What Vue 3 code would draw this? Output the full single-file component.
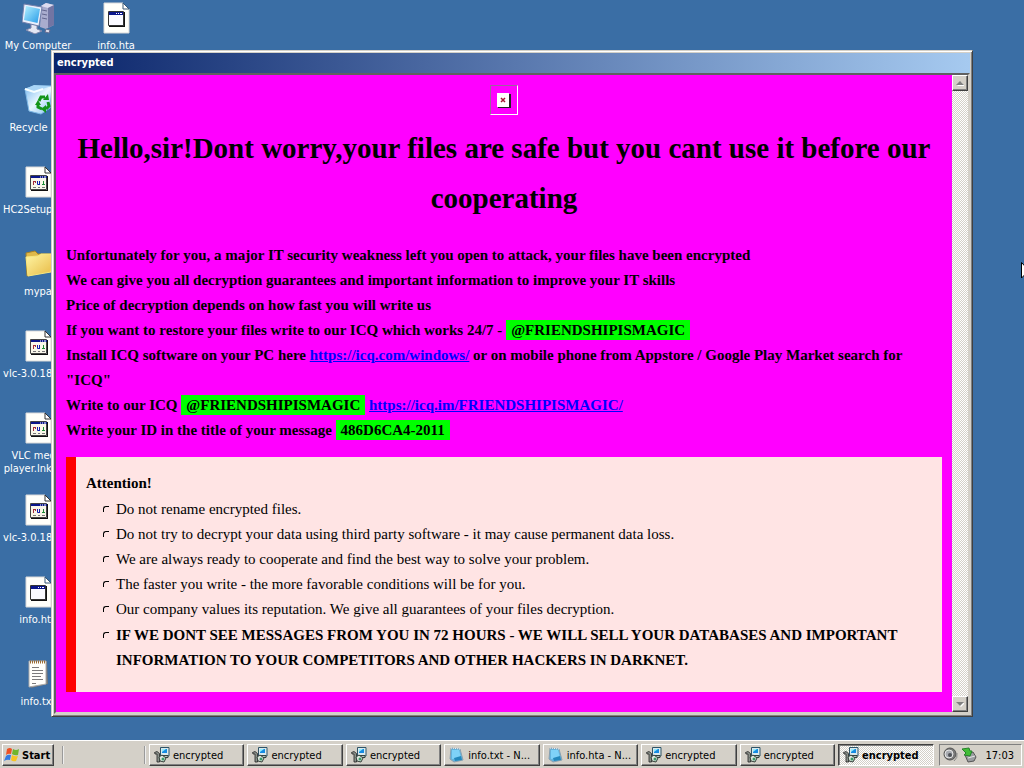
<script setup>
const firstColumn = [
  { icon: 'computer', label: 'My Computer' },
  { icon: 'recycle', label: 'Recycle Bin' },
  { icon: 'program', label: 'HC2Setup.exe' },
  { icon: 'folder', label: 'mypa' },
  { icon: 'program', label: 'vlc-3.0.18-win' },
  { icon: 'program', label: 'VLC media player.lnk.exe' },
  { icon: 'program', label: 'vlc-3.0.18-win' },
  { icon: 'hta', label: 'info.hta' },
  { icon: 'text', label: 'info.txt' }
]
const secondColumn = [{ icon: 'hta', label: 'info.hta' }]

const tasks = [
  { icon: 'installer', label: 'encrypted' },
  { icon: 'installer', label: 'encrypted' },
  { icon: 'installer', label: 'encrypted' },
  { icon: 'notepad', label: 'info.txt - N...' },
  { icon: 'notepad', label: 'info.hta - N...' },
  { icon: 'installer', label: 'encrypted' },
  { icon: 'installer', label: 'encrypted' },
  { icon: 'installer', label: 'encrypted', active: true }
]

const rules = [
  'Do not rename encrypted files.',
  'Do not try to decrypt your data using third party software - it may cause permanent data loss.',
  'We are always ready to cooperate and find the best way to solve your problem.',
  'The faster you write - the more favorable conditions will be for you.',
  'Our company values its reputation. We give all guarantees of your files decryption.'
]
</script>

<template>
  <div class="screen">
    <svg class="defs" aria-hidden="true">
      <defs>
        <linearGradient id="g-screen" x1="0" y1="0" x2="1" y2="1">
          <stop offset="0" stop-color="#b5f1ff" /><stop offset="1" stop-color="#269be8" />
        </linearGradient>
        <linearGradient id="g-bin" x1="0" y1="0" x2="1" y2="1">
          <stop offset="0" stop-color="#7db9ee" /><stop offset=".5" stop-color="#e8f7ff" /><stop offset="1" stop-color="#83bff0" />
        </linearGradient>
        <linearGradient id="g-folder" x1="0" y1="0" x2="1" y2="1">
          <stop offset="0" stop-color="#fff6a6" /><stop offset="1" stop-color="#e7b943" />
        </linearGradient>
      </defs>
      <symbol id="computer" viewBox="0 0 32 32">
        <path d="M19 4 24 1 32 3V23L24 27 18 25Z" fill="#a9acce" />
        <path d="M19 4 24 1 32 3 26 6Z" fill="#dcdcf0" />
        <path d="M26 6 32 3V23L26 26Z" fill="#7275a3" />
        <path d="M20 8 25 9M20 12 25 13M20 16 25 17" stroke="#62668e" />
        <path d="M9 22 15 23 15 27 20 29 13 32 4 28 9 26Z" fill="#e4e7f3" stroke="#7e86ab" />
        <path d="M2 2 20 5 17 24 0 20Z" fill="#e9effc" stroke="#727ea9" />
        <path d="M4 4 18 7 15.500 21 2 18Z" fill="url(#g-screen)" />
        <path d="M24 27 28 28 27 31 23 30Z" fill="#d9dbe9" stroke="#686d91" />
      </symbol>
      <symbol id="recycle" viewBox="0 0 32 32">
        <path d="M3 5 12 2 30 2 28 24 19 30 7 27Z" fill="url(#g-bin)" stroke="#7eb8e6" />
        <path d="M3 5 12 8 20 5 30 2 12 1Z" fill="#a8d5f7" />
        <path d="M3 5 12 8 21 5" fill="none" stroke="#f5fdff" stroke-width="2" />
        <path d="M17 17 19 13 23 13M26 18 27 22 24 25M20 25 16 23 16 20" fill="none" stroke="#139519" stroke-width="3" />
        <path d="M21 16H27L26 10ZM24 21 19 25 24 29ZM13 21 19 21 16 16Z" fill="#139519" />
      </symbol>
      <symbol id="hta" viewBox="0 0 32 32">
        <path d="M4 1H23L29 7V31H4Z" fill="#fffffa" stroke="#d9d9d9" />
        <path d="M23 1V7H29Z" fill="#fff" stroke="#365775" />
        <path d="M9 10H25V25H9Z" fill="#111" />
        <path d="M8.500 9.500H23.500V23.500H8.500Z" fill="#fafaff" stroke="#333" />
        <path d="M9 10H23V13H9Z" fill="#0a168b" />
        <path d="M16 11.500H17M18 11.500H19M20 11.500H22" stroke="#fff" />
      </symbol>
      <symbol id="program" viewBox="0 0 32 32">
        <path d="M4 1H23L29 7V31H4Z" fill="#fffffa" stroke="#d9d9d9" />
        <path d="M23 1V7H29Z" fill="#fff" stroke="#333" />
        <path d="M9 10H26V25H9Z" fill="#111" />
        <path d="M8 9H25V24H8Z" fill="#faf7e9" />
        <path d="M8.500 9.500H24.500V23.500H8.500Z" fill="none" stroke="#444" />
        <path d="M9 10H25V12H9Z" fill="#0a168b" />
        <path d="M18 11H19M20 11H21M22 11H24" stroke="#fff" />
        <path d="M11.500 15V19M11 15.500H14M13.500 15V17" fill="none" stroke="#a22c39" />
        <path d="M15.500 15V18.500H18M17.500 15V18" fill="none" stroke="#141eaf" />
        <path d="M20 18.500H23M21.500 15V19" stroke="#1c8e36" />
        <path d="M11 21.500H14M16 21.500H18M20 21.500H23" stroke="#777" />
      </symbol>
      <symbol id="folder" viewBox="0 0 32 32">
        <path d="M4 5 13 3 16 6 29 6V22L5 28Z" fill="#dfb84a" stroke="#a68227" />
        <path d="M4 9 16 8 19 6 31 6 29 24 6 28Z" fill="url(#g-folder)" stroke="#f8e77d" />
      </symbol>
      <symbol id="text" viewBox="0 0 32 32">
        <path d="M9 4 25 3 26 26 9 30Z" fill="#777" />
        <path d="M7 3H24V26L7 29Z" fill="#fffffb" stroke="#aaa" />
        <path d="M8 4H24" stroke="#9b6d35" stroke-width="3" stroke-dasharray="1 1" />
        <path d="M10 9.500H17M10 12.500H21M10 15.500H21M10 18.500H19M10 21.500H21M10 25.500H14" stroke="#7c7c7c" />
      </symbol>
      <symbol id="installer" viewBox="0 0 16 16">
        <path d="M6.500 .5H15V9H6.500Z" fill="#d9e9ee" stroke="#305467" />
        <path d="M8 2H13V6H8Z" fill="#158be2" />
        <path d="M8 2H12L8 5Z" fill="#91ecff" />
        <path d="M8 8.500H14V10.500H8Z" fill="#aebfbb" stroke="#35433e" />
        <path d="M.5 5.500 3 4.500 5.500 6.500V15H3V7H1Z" fill="#8b918b" stroke="#222" stroke-width=".8" />
        <path d="M5 10 8 8 12 11 10 15 6 14Z" fill="#dce5dd" stroke="#344039" />
        <circle cx="9" cy="12" r="1.500" fill="#3b986a" />
      </symbol>
      <symbol id="notepad" viewBox="0 0 16 16">
        <path d="M2 1 11 2 14 13 5 15 1 12Z" fill="#62b4df" stroke="#8aa0b0" />
        <path d="M3 3 10 3 12 11 3 12Z" fill="#7fd2f8" />
        <path d="M5 11 12 9 13 13 6 14Z" fill="#2589bd" />
        <path d="M2 1 11 2" stroke="#eef6fa" stroke-dasharray="1 1" />
      </symbol>
      <symbol id="flag" viewBox="0 0 16 16">
        <path d="M3 2Q6 0 8 2L7 7Q4 6 2 8Z" fill="#ee5124" />
        <path d="M9 2Q12 4 15 2L14 8Q11 9 8 7Z" fill="#70b52c" />
        <path d="M2 9Q4 7 7 8L6 13Q3 12 0 14Z" fill="#337be2" />
        <path d="M8 8Q11 10 14 9L12 14Q9 15 7 13Z" fill="#f8c421" />
      </symbol>
      <symbol id="volume" viewBox="0 0 16 16">
        <circle cx="8" cy="7" r="6" fill="#777" stroke="#555" />
        <circle cx="7" cy="7" r="4" fill="#a9acb2" stroke="#e6e6e6" />
        <circle cx="8" cy="8" r="2" fill="#4e5258" />
        <path d="M15 6Q16 11 12 14" fill="none" stroke="#888" />
      </symbol>
      <symbol id="eject" viewBox="0 0 16 16">
        <path d="M4 8 12 5 15 10 13 14 7 15Z" fill="#9b9ea2" stroke="#555" />
        <path d="M7 11 14 9" stroke="#e6e6e6" />
        <path d="M1 2 8 1 9 4 11 4 9 9 3 8 5 6Z" fill="#42bd38" stroke="#25832b" />
      </symbol>
    </svg>

    <main class="desktop">
      <ul v-for="(column, c) in [firstColumn, secondColumn]" :key="c" class="icons">
        <li v-for="(item, i) in column" :key="i" class="shortcut">
          <svg class="big-icon" aria-hidden="true"><use :href="'#' + item.icon" /></svg>
          <span>{{ item.label }}</span>
        </li>
      </ul>

      <section class="window" aria-label="encrypted">
        <header class="title">encrypted</header>
        <div class="client">
          <article class="note">
            <div class="missing">
              <svg viewBox="0 0 14 15" aria-label="missing image">
                <path d="M1 1H14V15H1Z" fill="#222" />
                <path d="M0 0H12V14H0Z" fill="#fff" />
                <path d="M4 5 8 9M8 5 4 9" stroke="#a51535" stroke-width="1.500" />
              </svg>
            </div>
            <h1>Hello,sir!Dont worry,your files are safe but you cant use it before our cooperating</h1>
            <div class="message">
              <p>Unfortunately for you, a major IT security weakness left you open to attack, your files have been encrypted</p>
              <p>We can give you all decryption guarantees and important information to improve your IT skills</p>
              <p>Price of decryption depends on how fast you will write us</p>
              <p>If you want to restore your files write to our ICQ which works 24/7 - <mark>@FRIENDSHIPISMAGIC</mark></p>
              <p>Install ICQ software on your PC here <a href="#windows">https://icq.com/windows/</a> or on mobile phone from Appstore / Google Play Market search for "ICQ"</p>
              <p>Write to our ICQ <mark>@FRIENDSHIPISMAGIC</mark> <a href="#contact">https://icq.im/FRIENDSHIPISMAGIC/</a></p>
              <p>Write your ID in the title of your message <mark>486D6CA4-2011</mark></p>
            </div>
            <section class="attention">
              <h2>Attention!</h2>
              <ul>
                <li v-for="rule in rules" :key="rule">{{ rule }}</li>
                <li class="strong">IF WE DONT SEE MESSAGES FROM YOU IN 72 HOURS - WE WILL SELL YOUR DATABASES AND IMPORTANT INFORMATION TO YOUR COMPETITORS AND OTHER HACKERS IN DARKNET.</li>
              </ul>
            </section>
          </article>
          <div class="scrollbar">
            <button type="button" aria-label="Scroll up"><svg viewBox="0 0 8 5"><path d="M1 5H9L5 1Z" fill="#fff" /><path d="M0 4H8L4 0Z" fill="#808080" /></svg></button>
            <button type="button" aria-label="Scroll down"><svg viewBox="0 0 8 5"><path d="M1 1H9L5 5Z" fill="#fff" /><path d="M0 0H8L4 4Z" fill="#808080" /></svg></button>
          </div>
        </div>
      </section>

      <svg class="pointer" viewBox="0 0 12 20" aria-hidden="true">
        <path d="M.5 .5V16L4 12.500 7 19 9 18 6 12H11Z" fill="#fff" stroke="#000" />
      </svg>
    </main>

    <footer class="taskbar">
      <button type="button" class="start"><svg class="small-icon" aria-hidden="true"><use href="#flag" /></svg>Start</button>
      <div class="quick"></div>
      <nav class="tasks">
        <button v-for="(task, i) in tasks" :key="i" type="button" class="task" :class="{ active: task.active }">
          <svg class="small-icon" aria-hidden="true"><use :href="'#' + task.icon" /></svg><span>{{ task.label }}</span>
        </button>
      </nav>
      <div class="tray">
        <svg class="small-icon" aria-hidden="true"><use href="#volume" /></svg>
        <svg class="small-icon" aria-hidden="true"><use href="#eject" /></svg>
        <time>17:03</time>
      </div>
    </footer>
  </div>
</template>

<style>
body {
  overflow: hidden;
}
</style>

<style scoped>
* {
  box-sizing: border-box;
}
.screen {
  display: flex;
  flex-direction: column;
  height: 100vh;
  background: #3a6ea5;
  font: 11px/13px "DejaVu Sans Condensed", "DejaVu Sans", sans-serif;
  overflow: hidden;
}
.defs {
  position: absolute;
  width: 0;
  height: 0;
}
.desktop {
  position: relative;
  flex: 1;
  min-height: 0;
  display: flex;
  gap: 2px;
}
ul {
  list-style: none;
  margin: 0;
  padding: 0;
}
.icons {
  width: 76px;
}
.shortcut {
  display: flex;
  flex-direction: column;
  align-items: center;
  gap: 5px;
  height: 82px;
  padding-top: 2px;
  color: #fff;
  text-align: center;
}
.big-icon {
  width: 32px;
  height: 32px;
}
.small-icon {
  width: 16px;
  height: 16px;
  flex: none;
}
.window {
  position: absolute;
  inset: 50px 51px 23px 51px;
  display: flex;
  flex-direction: column;
  padding: 2px;
  background: #d4d0c8;
  border: 1px solid;
  border-color: #d4d0c8 #404040 #404040 #d4d0c8;
  box-shadow: inset 1px 1px #fff, inset -1px -1px #808080;
}
.title {
  height: 20px;
  padding: 0 3px;
  background: linear-gradient(90deg, #0a246a, #a6caf0);
  color: #fff;
  font-weight: bold;
  line-height: 20px;
}
.client {
  flex: 1;
  display: flex;
  min-height: 0;
  border: 2px solid;
  border-color: #606060 #d4d0c8 #d4d0c8 #606060;
}
.note {
  flex: 1;
  min-width: 0;
  padding: 10px;
  background: #f0f;
  color: #000;
  font: 15px/25px "Liberation Serif", serif;
}
.missing {
  display: flex;
  width: 28px;
  height: 30px;
  margin: 0 auto 8px;
  padding: 7px 6px;
  border: 1px solid;
  border-color: #9b659b #fff #fff #9b659b;
}
.missing svg {
  width: 14px;
  height: 15px;
}
h1 {
  margin: 0 0 20px;
  font-size: 29px;
  line-height: 50px;
  text-align: center;
}
.message {
  font-weight: bold;
}
p {
  margin: 0;
}
mark {
  padding: 2px 5px;
  background: #0f0;
  color: #000;
}
a {
  color: #00f;
}
.attention {
  margin-top: 14px;
  padding: 13px 10px 19px;
  border-left: 10px solid #f00;
  background: #ffe4e4;
}
h2 {
  margin: 0;
  font-size: 15px;
  line-height: 26px;
}
.attention ul {
  padding: 1px 0 0 30px;
}
.attention li::before {
  content: "";
  float: left;
  width: 5px;
  height: 5px;
  margin: 9px 0 0 -13px;
  border: 1px solid #000;
  border-width: 1px 0 0 1px;
  border-top-left-radius: 3px;
}
.attention .strong {
  margin-top: 1px;
  font-weight: bold;
}
.scrollbar {
  width: 16px;
  display: flex;
  flex-direction: column;
  justify-content: space-between;
  background: repeating-conic-gradient(#fff 0 25%, #d4d0c8 0 50%) 0 0 / 2px 2px;
}
button {
  padding: 0;
  border: 1px solid;
  border-color: #fff #404040 #404040 #fff;
  background: #d4d0c8;
  box-shadow: inset -1px -1px #808080;
  color: #000;
  font: inherit;
}
.scrollbar button {
  display: flex;
  align-items: center;
  justify-content: center;
  height: 16px;
}
.scrollbar svg {
  width: 8px;
  height: 5px;
}
.pointer {
  position: absolute;
  left: 1021px;
  top: 262px;
  width: 12px;
  height: 20px;
}
.taskbar {
  display: flex;
  align-items: center;
  height: 28px;
  padding: 2px 2px 0;
  background: #d4d0c8;
  box-shadow: inset 0 1px #fff;
}
.start {
  display: flex;
  align-items: center;
  gap: 2px;
  width: 52px;
  height: 22px;
  padding-left: 1px;
  font-weight: bold;
}
.quick {
  width: 84px;
  height: 18px;
  margin: 0 3px 0 8px;
  border: 2px groove #eee;
  border-width: 0 2px;
}
.tasks {
  flex: 1;
  display: flex;
  gap: 3px;
  min-width: 0;
}
.task {
  flex: 1;
  min-width: 0;
  display: flex;
  align-items: center;
  gap: 3px;
  height: 22px;
  padding-left: 4px;
  white-space: nowrap;
  overflow: hidden;
}
.task.active {
  border-color: #404040 #fff #fff #404040;
  background: repeating-conic-gradient(#fff 0 25%, #d4d0c8 0 50%) 0 0 / 2px 2px;
  box-shadow: inset 1px 1px #808080;
  font-weight: bold;
}
.tray {
  display: flex;
  align-items: center;
  gap: 3px;
  height: 22px;
  margin-left: 6px;
  padding: 0 7px 0 2px;
  border: 1px solid;
  border-color: #808080 #fff #fff #808080;
}
.tray time {
  margin-left: 5px;
}
</style>
